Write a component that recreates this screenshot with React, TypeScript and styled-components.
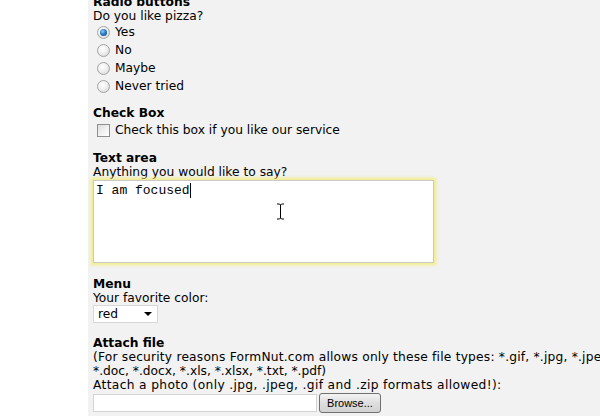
import React from 'react'
import styled, { createGlobalStyle } from 'styled-components'

const GlobalStyle = createGlobalStyle`
  html, body {
    margin: 0;
    padding: 0;
    background: #ffffff;
    overflow: hidden;
  }
  body {
    font-family: "DejaVu Sans", Verdana, sans-serif;
    font-size: 12.25px;
    color: #000000;
  }
`

const Page = styled.div`
  display: flex;
  width: 600px;
  height: 416px;
  overflow: hidden;
`

const Gutter = styled.div`
  width: 88px;
  flex-shrink: 0;
  background: #ffffff;
`

const Panel = styled.div`
  flex: 1;
  background: #f2f2f2;
  padding-left: 5px;
  min-width: 0;
`

const Scrolled = styled.div`
  margin-top: -5px;
`

const Section = styled.div<{ $gap?: number }>`
  margin-bottom: ${(p) => p.$gap ?? 11}px;
`

const Heading = styled.div`
  font-weight: bold;
  line-height: 14px;
  white-space: nowrap;
`

const Line = styled.div<{ $track?: number }>`
  line-height: 14px;
  white-space: nowrap;
  letter-spacing: ${(p) => p.$track ?? 0}px;
`

const OptionRow = styled.label<{ $height?: number }>`
  display: flex;
  align-items: center;
  height: ${(p) => p.$height ?? 18}px;
  padding-left: 4px;
  gap: 5px;
  white-space: nowrap;
`

const Radio = styled.span<{ $checked?: boolean }>`
  position: relative;
  display: inline-block;
  width: 11px;
  height: 11px;
  border-radius: 50%;
  border: 1px solid #a4a4a4;
  background: radial-gradient(circle at 40% 35%, #ffffff 0%, #f0f0f0 45%, #cfcfcf 100%);
  &::after {
    content: '';
    display: ${(p) => (p.$checked ? 'block' : 'none')};
    position: absolute;
    left: 2px;
    top: 2px;
    width: 7px;
    height: 7px;
    border-radius: 50%;
    background: radial-gradient(circle at 40% 35%, #8ecbf5 0%, #2a7cc7 45%, #0c3f7a 100%);
  }
`

const Check = styled.span`
  display: inline-block;
  width: 11px;
  height: 11px;
  border: 1px solid #8e8f8f;
  background: linear-gradient(135deg, #dcdcdc 0%, #f4f4f4 60%, #ffffff 100%);
`

const TextBox = styled.div`
  position: relative;
  box-sizing: border-box;
  width: 341px;
  height: 83px;
  margin-top: 1px;
  padding: 2px;
  background: #ffffff;
  border: 1px solid #c9c9c9;
  box-shadow: 0 0 3px 2px rgba(242, 236, 120, 0.9);
  font-family: "Liberation Mono", "Courier New", monospace;
  font-size: 13px;
  line-height: 15px;
`

const Caret = styled.span`
  display: inline-block;
  width: 1px;
  height: 15px;
  background: #000;
  vertical-align: top;
`

const Pointer = styled.svg`
  position: absolute;
  left: 182px;
  top: 22px;
`

const Select = styled.div`
  display: flex;
  align-items: center;
  justify-content: space-between;
  box-sizing: border-box;
  width: 65px;
  height: 18px;
  background: #ffffff;
  border: 1px solid #d8d8d8;
  padding: 0 4px;
  line-height: 14px;
`

const Arrow = styled.span`
  width: 0;
  height: 0;
  border-left: 4px solid transparent;
  border-right: 4px solid transparent;
  border-top: 4px solid #000;
  margin-right: 1px;
`

const FileRow = styled.div`
  display: flex;
  align-items: center;
  gap: 2px;
  margin-top: 1px;
`

const FileField = styled.div`
  box-sizing: border-box;
  width: 224px;
  height: 18px;
  background: #ffffff;
  border: 1px solid #d4d4d4;
`

const Browse = styled.div`
  box-sizing: border-box;
  width: 62px;
  height: 20px;
  border: 1px solid #707070;
  border-radius: 3px;
  background: linear-gradient(#f4f4f4, #dedede 50%, #d2d2d2);
  font-family: "Liberation Sans", Arial, sans-serif;
  font-size: 11px;
  display: flex;
  align-items: center;
  justify-content: center;
`

const App: React.FC = () => {
  const pizza = ['Yes', 'No', 'Maybe', 'Never tried']

  return (
    <Page>
      <GlobalStyle />
      <Gutter />
      <Panel>
        <Scrolled>
          <Section>
            <Heading>Radio buttons</Heading>
            <Line>Do you like pizza?</Line>
            {pizza.map((p, i) => (
              <OptionRow key={p}>
                <Radio $checked={i === 0} />
                {p}
              </OptionRow>
            ))}
          </Section>

          <Section>
            <Heading>Check Box</Heading>
            <OptionRow $height={20}>
              <Check />
              Check this box if you like our service
            </OptionRow>
          </Section>

          <Section $gap={14}>
            <Heading>Text area</Heading>
            <Line>Anything you would like to say?</Line>
            <TextBox>
              I am focused<Caret />
              <Pointer width="9" height="17" viewBox="0 0 9 17">
                <path d="M1 1h2.5l1 1 1-1H8M4.5 2v13M1 16h2.5l1-1 1 1H8" fill="none" stroke="#000" strokeWidth="1" />
              </Pointer>
            </TextBox>
          </Section>

          <Section $gap={13}>
            <Heading>Menu</Heading>
            <Line>Your favorite color:</Line>
            <Select>
              red
              <Arrow />
            </Select>
          </Section>

          <Section>
            <Heading>Attach file</Heading>
            <Line $track={0.2}>(For security reasons FormNut.com allows only these file types: *.gif, *.jpg, *.jpeg, *.png, *.zip,</Line>
            <Line>*.doc, *.docx, *.xls, *.xlsx, *.txt, *.pdf)</Line>
            <Line $track={0.35}>Attach a photo (only .jpg, .jpeg, .gif and .zip formats allowed!):</Line>
            <FileRow>
              <FileField />
              <Browse>Browse...</Browse>
            </FileRow>
          </Section>
        </Scrolled>
      </Panel>
    </Page>
  )
}

export default App
